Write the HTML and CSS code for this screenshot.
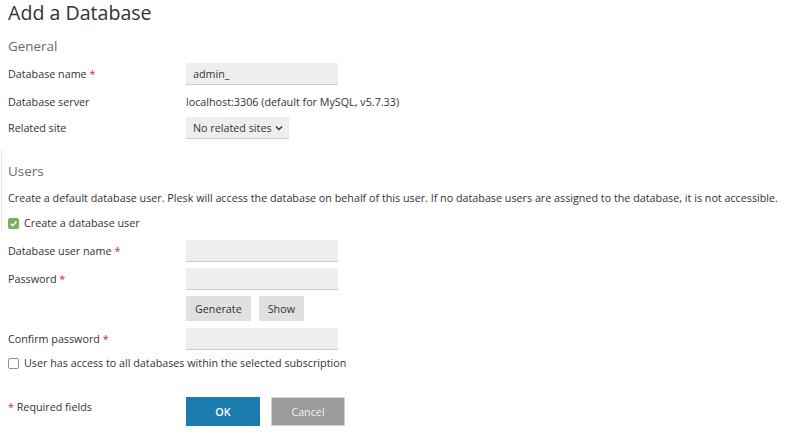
FILE: index.html
```html
<!DOCTYPE html>
<html lang="en">
<head>
<meta charset="utf-8">
<title>Add a Database</title>
<link rel="stylesheet" href="styles.css">
</head>
<body>
<main class="page">
  <h1 class="page-title">Add a Database</h1>

  <section class="section general">
    <h2 class="section-title">General</h2>
    <div class="row row-name">
      <label class="label">Database name <span class="req">*</span></label>
      <div class="field"><input class="input" type="text" value="admin_"></div>
    </div>
    <div class="row row-server">
      <span class="label">Database server</span>
      <div class="field"><span class="value">localhost:3306 (default for MySQL, v5.7.33)</span></div>
    </div>
    <div class="row">
      <label class="label">Related site</label>
      <div class="field">
        <div class="select">
          <span>No related sites</span>
          <svg class="chev" width="8" height="6" viewBox="0 0 8 6"><path d="M1 1.5 L4 4.5 L7 1.5" fill="none" stroke="#333" stroke-width="1.4"/></svg>
        </div>
      </div>
    </div>
  </section>

  <section class="section users">
    <h2 class="section-title">Users</h2>
    <p class="hint">Create a default database user. Plesk will access the database on behalf of this user. If no database users are assigned to the database, it is not accessible.</p>
    <label class="check check-first">
      <span class="box checked"><svg width="9" height="9" viewBox="0 0 10 10"><path d="M2 5.2 L4.2 7.4 L8.2 2.8" fill="none" stroke="#fff" stroke-width="1.7"/></svg></span>
      Create a database user
    </label>
    <div class="row">
      <label class="label">Database user name <span class="req">*</span></label>
      <div class="field"><input class="input" type="text"></div>
    </div>
    <div class="row">
      <label class="label">Password <span class="req">*</span></label>
      <div class="field"><input class="input" type="password"></div>
    </div>
    <div class="row btn-row">
      <span class="label"></span>
      <div class="field actions-small">
        <button class="btn-light" type="button">Generate</button>
        <button class="btn-light" type="button">Show</button>
      </div>
    </div>
    <div class="row">
      <label class="label">Confirm password <span class="req">*</span></label>
      <div class="field"><input class="input" type="password"></div>
    </div>
    <label class="check check-last">
      <span class="box"></span>
      User has access to all databases within the selected subscription
    </label>
  </section>

  <footer class="form-footer">
    <span class="label footer-label"><span class="req">*</span> Required fields</span>
    <div class="field actions">
      <button class="btn-primary" type="button">OK</button>
      <button class="btn-cancel" type="button">Cancel</button>
    </div>
  </footer>
</main>
</body>
</html>
```

FILE: styles.css
```css
* { box-sizing: border-box; }

html, body {
  margin: 0;
  padding: 0;
  background: #fff;
}

body {
  font-family: "Open Sans", "DejaVu Sans", sans-serif;
  font-size: 10.75px;
  color: #333;
}

.page {
  padding: 0 8px;
}

.page-title {
  margin: 0;
  font-size: 19.6px;
  font-weight: 400;
  line-height: 26px;
  color: #333;
}

.section-title {
  margin: 0;
  font-size: 13.4px;
  font-weight: 400;
  color: #6b6b6b;
  line-height: 20px;
}

/* General block */
.general {
  margin-top: 10px;
}

.general > .section-title {
  margin-bottom: 7px;
}

.row {
  display: flex;
  align-items: center;
  min-height: 22px;
  margin-bottom: 6px;
}

.row-server {
  margin-bottom: 4px;
}

.label {
  width: 178px;
  flex: none;
  line-height: 22px;
}

.req {
  color: #d0213f;
}

.field {
  display: flex;
  align-items: center;
  gap: 8px;
}

.value {
  line-height: 22px;
}

.input {
  width: 152px;
  height: 22px;
  border: 0;
  border-bottom: 1px solid #c9ccd0;
  background: #eeeeee;
  font: inherit;
  color: #333;
  padding: 0 7px;
  margin: 0;
  outline: none;
}

.select {
  display: flex;
  align-items: center;
  width: 103px;
  height: 22px;
  padding: 0 6px 0 7px;
  background: #eeeeee;
  border-bottom: 1px solid #c9ccd0;
}

.chev {
  margin-left: auto;
}

/* Users block, with its thin left rule */
.users {
  margin-top: 22px;
  margin-left: -8px;
  padding-left: 8px;
  position: relative;
}

.users::before {
  content: "";
  position: absolute;
  left: 1px;
  top: -11px;
  height: 82px;
  width: 1px;
  background: #e6e6e6;
}

.users > .section-title {
  margin-bottom: 8px;
}

.hint {
  margin: 0 0 7px;
  line-height: 18px;
  white-space: nowrap;
}

.check {
  display: flex;
  align-items: center;
  gap: 5px;
  height: 18px;
}

.check-first {
  margin-bottom: 8px;
}

.check-last {
  margin-top: -2px;
}

.box {
  width: 11px;
  height: 11px;
  border: 1px solid #8a8f99;
  border-radius: 2px;
  background: #fff;
  display: inline-flex;
  align-items: center;
  justify-content: center;
}

.box.checked {
  background: #7bb15a;
  border-color: #7bb15a;
}

.btn-row {
  margin-bottom: 7px;
}

.btn-light {
  height: 25px;
  padding: 0 9px;
  border: 0;
  background: #e0e0e0;
  font: inherit;
  color: #333;
}

/* Footer with the main actions */
.form-footer {
  display: flex;
  align-items: flex-start;
  margin-top: 25px;
}

.footer-label {
  line-height: 20px;
}

.actions {
  gap: 11px;
}

.btn-primary,
.btn-cancel {
  width: 74px;
  height: 29px;
  border: 0;
  font: inherit;
  color: #fff;
}

.btn-primary {
  background: #1a7dae;
  font-weight: 600;
}

.btn-cancel {
  background: #9c9c9c;
  color: #f0f0f0;
  border: 1px solid #d2d2d2;
}
```
